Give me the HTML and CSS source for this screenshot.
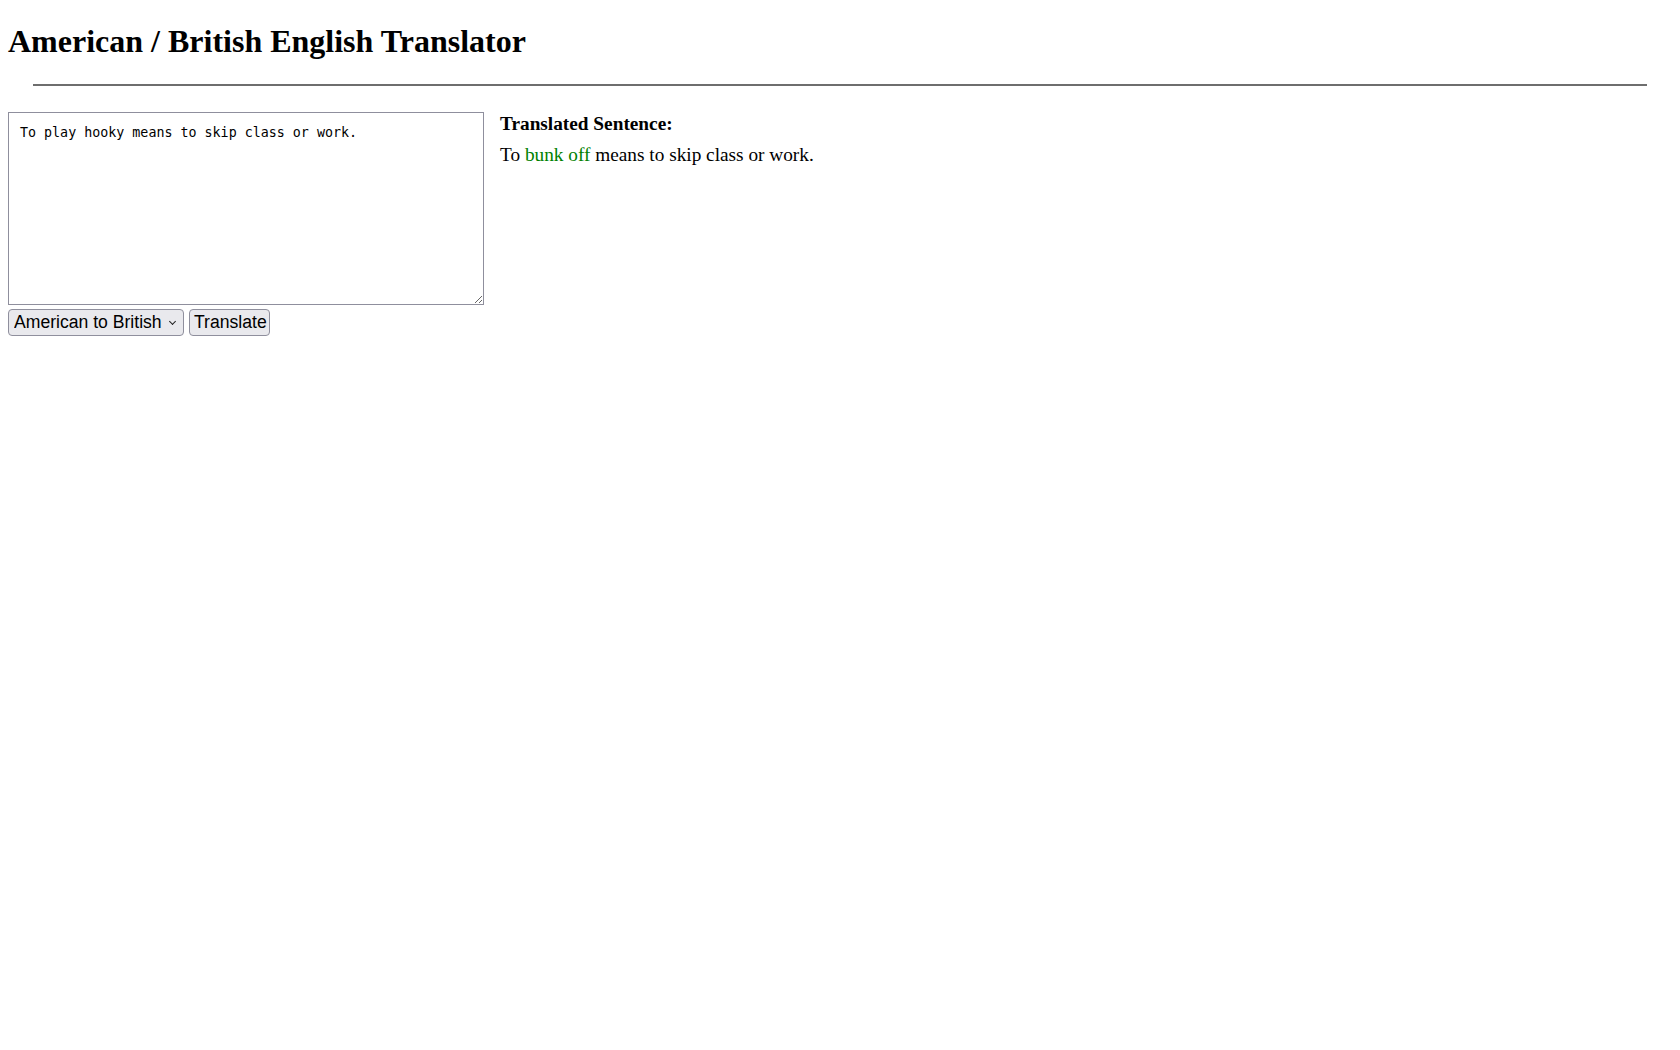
FILE: index.html
```html
<!DOCTYPE html>
<html lang="en">
<head>
<meta charset="utf-8">
<title>American / British English Translator</title>
<link rel="stylesheet" href="styles.css">
</head>
<body>
<header class="page-header">
  <h1 class="title">American / British English Translator</h1>
</header>
<hr class="divider">
<main class="translator">
  <section class="input-col">
    <textarea class="text-input" id="text-input">To play hooky means to skip class or work.</textarea>
    <div class="controls">
      <span class="select-wrap">
        <select class="locale-select" id="locale-select">
          <option value="american-to-british">American to British</option>
          <option value="british-to-american">British to American</option>
        </select>
      </span>
      <button class="translate-btn" id="translate-btn" type="button">Translate</button>
    </div>
  </section>
  <section class="output-col">
    <h3 class="output-label">Translated Sentence:</h3>
    <div class="output-text">To <span class="highlight">bunk off</span> means to skip class or work.</div>
  </section>
</main>
</body>
</html>
```
FILE: styles.css
```css
html, body {
  background: #fff;
}
body {
  margin: 0;
  padding: 0 8px;
  font-family: "Liberation Serif", "Times New Roman", serif;
  color: #000;
}
.page-header {
  padding-top: 23px;
}
.title {
  margin: 0;
  font-size: 32px;
  font-weight: bold;
  line-height: 36.8px;
}
.divider {
  margin: 24px 25px 0 25px;
  border: none;
  height: 2px;
  background: #6e6e6e;
}
.translator {
  display: flex;
  align-items: flex-start;
  gap: 16px;
  margin-top: 26px;
}
.input-col {
  display: flex;
  flex-direction: column;
  gap: 4px;
}
.text-input {
  box-sizing: border-box;
  width: 476px;
  height: 193px;
  margin: 0;
  padding: 12px 11px 10px;
  border: 1px solid #8f8f9d;
  font-family: "DejaVu Sans Mono", "Liberation Mono", monospace;
  font-size: 13.333px;
  line-height: 16px;
  color: #000;
  background: #fff;
}
.controls {
  display: flex;
  gap: 5px;
}
.select-wrap {
  position: relative;
  display: inline-block;
}
.select-wrap::after {
  content: "";
  position: absolute;
  right: 9px;
  top: 10px;
  width: 4px;
  height: 4px;
  border-right: 1.5px solid #222;
  border-bottom: 1.5px solid #222;
  transform: rotate(45deg);
  pointer-events: none;
}
.locale-select,
.translate-btn {
  box-sizing: border-box;
  height: 27px;
  margin: 0;
  font-family: "Liberation Sans", Arial, sans-serif;
  font-size: 17.6px;
  color: #000;
  background: #e9e9ed;
  border: 1px solid #8f8f9d;
  border-radius: 4px;
}
.locale-select {
  -webkit-appearance: none;
  appearance: none;
  width: 176px;
  padding: 0 20px 0 5px;
}
.translate-btn {
  width: 81px;
  padding: 0 4px;
}
.output-col {
  padding-top: 1px;
}
.output-label {
  margin: 0;
  font-size: 19.3px;
  font-weight: bold;
  line-height: 21px;
}
.output-text {
  margin-top: 10px;
  font-size: 19.3px;
  line-height: 22px;
}
.highlight {
  color: green;
}
```
